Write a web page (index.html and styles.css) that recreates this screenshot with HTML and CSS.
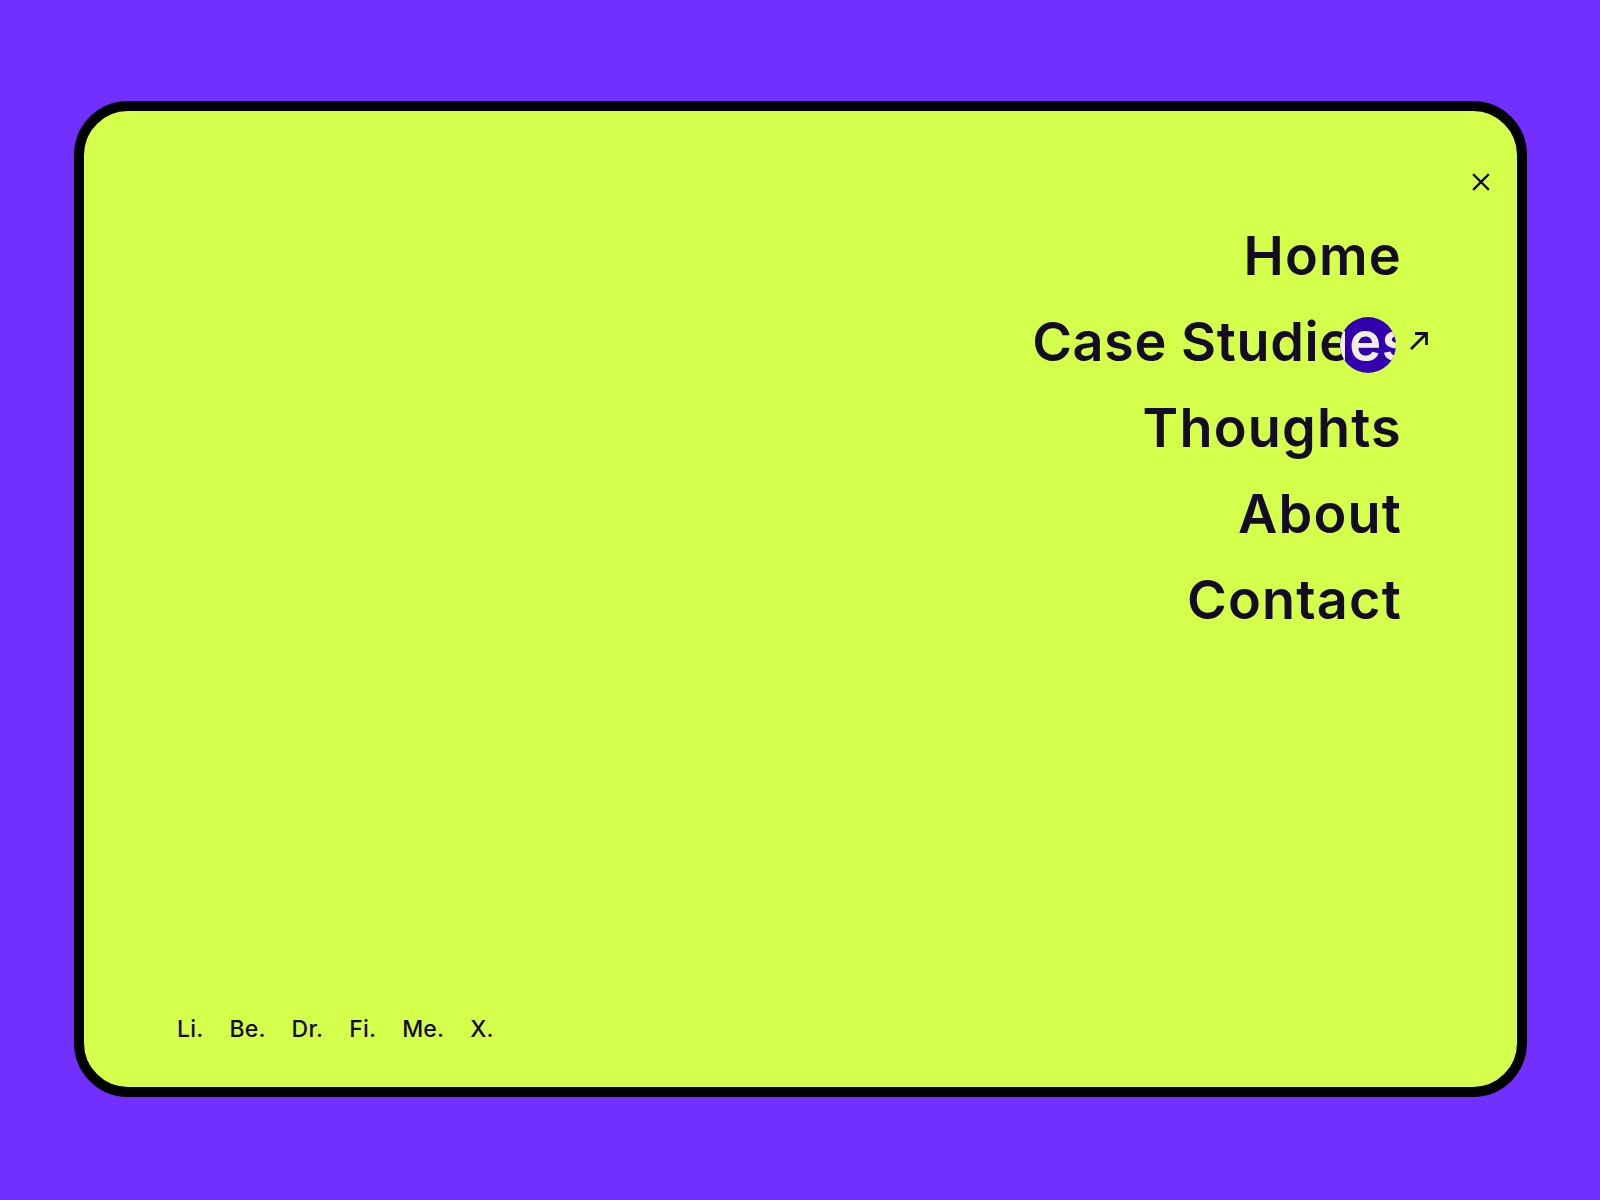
FILE: index.html
```html
<!DOCTYPE html>
<html lang="en">
<head>
<meta charset="UTF-8">
<meta name="viewport" content="width=device-width, initial-scale=1.0">
<title>Menu</title>
<link rel="stylesheet" href="styles.css">
</head>
<body>

<div class="card">
    <div class="card-top">
        <button class="close-btn" type="button" aria-label="Close menu">
            <svg width="18" height="18" viewBox="0 0 18 18" fill="none" stroke="currentColor" stroke-width="2.4" stroke-linecap="square">
                <path d="M2 2L16 16M16 2L2 16"/>
            </svg>
        </button>
    </div>

    <nav class="menu">
        <ul class="menu-list">
            <li><a class="menu-link" href="#">Home</a></li>
            <li>
                <a class="menu-link menu-link-active" href="#"><span class="menu-label">Case Studies<span class="cursor-copy" aria-hidden="true">Case Studies</span></span><svg class="menu-arrow" width="20" height="20" viewBox="0 0 20 20" fill="none" stroke="currentColor" stroke-width="2.8"><path d="M2 18L17.5 2.5M6 2.5H17.5V14"/></svg></a>
            </li>
            <li><a class="menu-link" href="#">Thoughts</a></li>
            <li><a class="menu-link" href="#">About</a></li>
            <li><a class="menu-link" href="#">Contact</a></li>
        </ul>
    </nav>

    <ul class="socials">
        <li><a href="#">Li.</a></li>
        <li><a href="#">Be.</a></li>
        <li><a href="#">Dr.</a></li>
        <li><a href="#">Fi.</a></li>
        <li><a href="#">Me.</a></li>
        <li><a href="#">X.</a></li>
    </ul>
</div>

</body>
</html>
```

FILE: styles.css
```css
/* Basic reset */
* {
    box-sizing: border-box;
}

html, body {
    height: 100%;
}

body {
    margin: 0;
    padding: 101px 73px 103px 74px;
    display: flex;
    flex-direction: column;
    background-color: #7130ff;
    font-family: Inter, "Liberation Sans", Arial, sans-serif;
    color: #130c24;
}

ul {
    list-style: none;
    margin: 0;
    padding: 0;
}

a {
    color: inherit;
    text-decoration: none;
}

/* Card */
.card {
    flex: 1;
    display: flex;
    flex-direction: column;
    background-color: #d4ff4b;
    border: 10px solid #000;
    border-radius: 54px;
    padding: 59px 24px 45px 93px;
}

.card-top {
    display: flex;
    justify-content: flex-end;
}

.close-btn {
    width: 24px;
    height: 24px;
    padding: 0;
    border: none;
    background: none;
    color: #130c24;
    display: flex;
    align-items: center;
    justify-content: center;
    cursor: pointer;
}

/* Menu */
.menu {
    margin-top: 19px;
    margin-right: 91px;
}

.menu-list {
    text-align: right;
}

.menu-link {
    position: relative;
    display: inline-block;
    font-size: 54px;
    font-weight: 600;
    line-height: 86px;
    letter-spacing: 1.2px;
}

.menu-link-active {
    margin-right: 20px;
    letter-spacing: 0.6px;
}

.menu-label {
    position: relative;
    display: inline-block;
}

/* cursor blob over the hovered link */
.cursor-copy {
    position: absolute;
    top: 0;
    left: 0;
    right: -30px;
    bottom: 0;
    color: #f2f0dc;
    background-color: #3300b0;
    clip-path: circle(28px at calc(100% - 44px) 46px);
}

.menu-arrow {
    position: absolute;
    top: 32px;
    right: -47px;
    width: 20px;
    height: 20px;
}

/* Social links */
.socials {
    margin-top: auto;
    display: flex;
    gap: 26px;
    font-size: 23px;
    font-weight: 500;
    letter-spacing: 0.2px;
    line-height: 26px;
}
```
